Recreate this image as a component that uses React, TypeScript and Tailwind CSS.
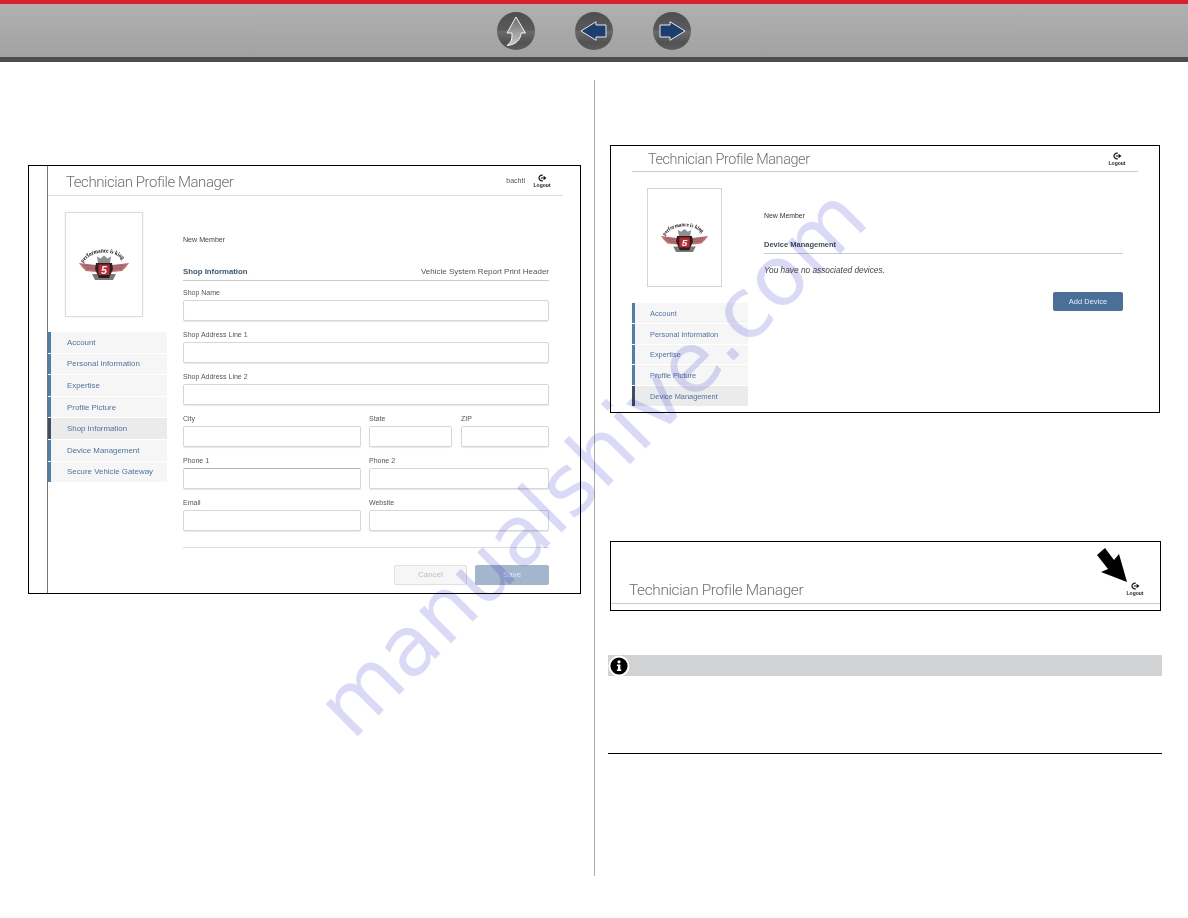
import { useId } from "react";

const menuA = ["Account", "Personal Information", "Expertise", "Profile Picture", "Shop Information", "Device Management", "Secure Vehicle Gateway"];
const menuB = ["Account", "Personal Information", "Expertise", "Profile Picture", "Device Management"];

function NavCircle({ children }: { children: React.ReactNode }) {
  return (
    <div className="w-[38px] h-[38px] rounded-full bg-[linear-gradient(180deg,#4e4e50_0%,#5a5a5c_46%,#6a6a6b_52%,#525254_80%,#5c5c5d_100%)]">
      <svg viewBox="0 0 38 38" className="w-[38px] h-[38px]">
        {children}
      </svg>
    </div>
  );
}

function Logo({ className }: { className: string }) {
  const id = useId();
  return (
    <svg viewBox="0 0 50 33" className={`overflow-visible ${className}`}>
      <path id={id} d="M4 15 C10 6 19 4.5 25 4.5 C31 4.5 40 6 46 15" fill="none" />
      <text fontFamily="'Liberation Serif', serif" fontWeight="700" fontSize="6" fill="#111111">
        <textPath href={`#${id}`} textLength="45" lengthAdjust="spacingAndGlyphs">performance is king</textPath>
      </text>
      <path d="M19 15 L18 8.5 L21.5 10.5 L25 7.5 L28.5 10.5 L32 8.5 L31 15 Z" fill="#8d8f92" />
      <path d="M0 15 L17 17 L17 24 L7 23 L3 19 Z" fill="#c9686c" />
      <path d="M50 15 L33 17 L33 24 L43 23 L47 19 Z" fill="#c9686c" />
      <path d="M5 17.5 L16 18.5 M7 20 L16 21 M45 17.5 L34 18.5 M43 20 L34 21" stroke="#6b6b6b" strokeWidth="0.8" />
      <path d="M13 26 L37 26 L34 32 L16 32 Z" fill="#77787a" />
      <path d="M17 15 H33 L34 21 L30 30 H20 L16 21 Z" fill="#232323" />
      <rect x="19.5" y="16.5" width="11" height="10.5" fill="#c9252c" />
      <text x="25" y="25.5" textAnchor="middle" fontFamily="'Liberation Sans', sans-serif" fontWeight="700" fontStyle="italic" fontSize="10.5" fill="#ffffff">5</text>
    </svg>
  );
}

function Logout({ className = "" }: { className?: string }) {
  return (
    <div className={`flex flex-col items-center w-[16px] ${className}`}>
      <svg viewBox="0 0 12 10" className="w-[10px] h-[8px]">
        <path d="M7 1.6 A3.6 3.6 0 1 0 7 8.4" fill="none" stroke="#111" strokeWidth="1.5" />
        <path d="M4.5 5 H9.5 M8 3 L10.5 5 L8 7" fill="none" stroke="#111" strokeWidth="1.3" />
      </svg>
      <span className="text-[5px] leading-[6px] font-bold text-[#222]">Logout</span>
    </div>
  );
}

function Title({ size }: { size: string }) {
  return <span className={`font-['Roboto',sans-serif] font-light text-[#6f6f6f] ${size}`}>Technician Profile Manager</span>;
}

function Menu({ items, active, itemClass }: { items: string[]; active: string; itemClass: string }) {
  return (
    <div className="flex flex-col gap-px">
      {items.map((m) => (
        <div
          key={m}
          className={`flex items-center border-l-[3px] pt-px text-[#4c74a0] ${itemClass} ${
            m === active ? "bg-[#ebebeb] border-[#3f4e62]" : "bg-[#f6f6f6] border-[#4a80b4]"
          }`}
        >
          {m}
        </div>
      ))}
    </div>
  );
}

function Field({ label, className, inputClass = "border-[#d6d6d6]" }: { label: string; className: string; inputClass?: string }) {
  return (
    <label className={`block ${className}`}>
      <span className="block h-[13px] text-[7px] leading-[12px] text-[#555]">{label}</span>
      <input readOnly className={`block w-full h-[21px] bg-white border rounded-[2px] shadow-[0_1px_1px_#e8e8e8] ${inputClass}`} />
    </label>
  );
}

export default function App() {
  return (
    <div className="relative w-[1188px] h-[918px] overflow-hidden bg-white font-['Liberation_Sans',Arial,sans-serif]">
      {/* top bar */}
      <div className="h-[4px] bg-[#d9202c]" />
      <div className="flex items-center justify-center gap-[40px] h-[53px] bg-[linear-gradient(180deg,#b0b0b0,#a2a2a2)]">
        <NavCircle>
          <defs>
            <linearGradient id="upFill" x1="0" y1="0" x2="0" y2="1">
              <stop offset="0" stopColor="#6a6a6c" />
              <stop offset="1" stopColor="#c9c9c9" />
            </linearGradient>
          </defs>
          <path d="M19 5 L28.5 21 H24 C24 27 19 33 10 33.5 C13.5 31 15 28 15 24 V21 H10 Z" fill="url(#upFill)" stroke="#f4f4f4" strokeWidth="1" strokeLinejoin="round" />
        </NavCircle>
        <NavCircle>
          <path d="M6 19 L21 9.7 V13 H31 V25 H21 V28.3 Z" fill="#1c3d70" stroke="#e8e8e8" strokeWidth="1" strokeLinejoin="round" />
        </NavCircle>
        <NavCircle>
          <path d="M32 19 L17 9.7 V13 H7 V25 H17 V28.3 Z" fill="#1c3d70" stroke="#e8e8e8" strokeWidth="1" strokeLinejoin="round" />
        </NavCircle>
      </div>
      <div className="h-[5px] bg-[#4d4d4f]" />

      <div className="flex mt-[18px] h-[796px]">
        {/* left column */}
        <div className="w-[595px] border-r border-[#aaaaaa] pl-[28px] pt-[85px]">
          <div className="w-[553px] h-[429px] border border-black pl-[18px]">
            <div className="w-[516px] h-full border-l border-[#777777]">
              <div className="flex items-center justify-between h-[30px] border-b border-[#dddddd] pl-[18px] pr-[13px]">
                <Title size="mt-[3px] text-[15px] tracking-[-0.44px]" />
                <div className="flex items-center gap-[9px]">
                  <span className="mt-px text-[7px] text-[#555]">bachtl</span>
                  <Logout />
                </div>
              </div>
              <div className="flex">
                <div className="w-[119px] pt-[16px]">
                  <div className="flex items-center justify-center ml-[17px] w-[78px] h-[105px] border border-[#dddddd] shadow-[0_0_1px_#dddddd]">
                    <Logo className="w-[50px] h-[33px]" />
                  </div>
                  <div className="mt-[15px]">
                    <Menu items={menuA} active="Shop Information" itemClass="h-[20.6px] pl-[16px] text-[7.9px]" />
                  </div>
                </div>
                <div className="w-[366px] ml-[16px] pt-[39px]">
                  <div className="h-[10px] text-[7.1px] leading-[10px] text-[#444]">New Member</div>
                  <div className="flex items-center justify-between mt-[18px] h-[18px] border-b border-[#cccccc]">
                    <span className="text-[7.8px] font-bold text-[#3d5874]">Shop Information</span>
                    <span className="text-[8px] text-[#555]">Vehicle System Report Print Header</span>
                  </div>
                  <div className="flex flex-col gap-[8px] mt-[6px]">
                    <Field label="Shop Name" className="w-full" />
                    <Field label="Shop Address Line 1" className="w-full" />
                    <Field label="Shop Address Line 2" className="w-full" />
                    <div className="flex">
                      <Field label="City" className="w-[178px]" />
                      <Field label="State" className="w-[83px] ml-[8px]" />
                      <Field label="ZIP" className="w-[88px] ml-[9px]" />
                    </div>
                    <div className="flex gap-[8px]">
                      <Field label="Phone 1" className="w-[178px]" inputClass="border-[#d6d6d6] border-t-[#b4b4b4]" />
                      <Field label="Phone 2" className="w-[180px]" />
                    </div>
                    <div className="flex gap-[8px]">
                      <Field label="Email" className="w-[178px]" />
                      <Field label="Website" className="w-[180px]" />
                    </div>
                  </div>
                  <div className="mt-[16px] border-t border-[#dddddd]" />
                  <div className="flex justify-end gap-[8px] mt-[17px]">
                    <button className="w-[73px] h-[20px] bg-[#f6f6f6] border border-[#e0e0e0] rounded-[2px] text-[8px] text-[#bdbdbd]">Cancel</button>
                    <button className="w-[74px] h-[20px] bg-[#a4b6cd] rounded-[2px] text-[8px] text-[#e3e6f4]">Save</button>
                  </div>
                </div>
              </div>
            </div>
          </div>
        </div>

        {/* right column */}
        <div className="w-[554px] ml-[13px] pt-[65px]">
          <div className="ml-[2px] w-[550px] h-[268px] border border-black pl-[21px]">
            <div className="w-[506px]">
              <div className="flex items-center justify-between h-[26px] border-b border-[#cccccc] pl-[16px] pr-[13px]">
                <Title size="mt-[3px] text-[14.4px] tracking-[-0.38px]" />
                <Logout />
              </div>
              <div className="flex">
                <div className="w-[116px] pt-[16px]">
                  <div className="flex items-center justify-center ml-[15px] w-[75px] h-[99px] border border-[#d4d4d4]">
                    <Logo className="w-[47px] h-[33px]" />
                  </div>
                  <div className="mt-[16px]">
                    <Menu items={menuB} active="Device Management" itemClass="h-[19.8px] pl-[15px] text-[7.4px]" />
                  </div>
                </div>
                <div className="w-[359px] ml-[16px] pt-[39px]">
                  <div className="h-[10px] text-[6.9px] leading-[10px] text-[#333]">New Member</div>
                  <div className="flex items-center mt-[16px] h-[17px] border-b border-[#cccccc]">
                    <span className="text-[7.5px] font-bold text-[#3d4d60]">Device Management</span>
                  </div>
                  <div className="mt-[9px] text-[8.3px] leading-[14px] italic text-[#444]">You have no associated devices.</div>
                  <div className="flex justify-end mt-[15px]">
                    <button className="w-[70px] h-[19px] bg-[#4a7099] rounded-[2px] text-[7.5px] text-[#e6edf4]">Add Device</button>
                  </div>
                </div>
              </div>
            </div>
          </div>

          <div className="relative ml-[2px] w-[551px] h-[70px] mt-[128px] border border-black flex flex-col justify-end pb-[6px]">
            <div className="flex items-end justify-between h-[34px] border-b border-[#cccccc] pl-[18px] pr-[17px] pb-[4px]">
              <Title size="text-[15.4px] leading-[18px] tracking-[-0.35px]" />
              <Logout className="mb-[3px]" />
            </div>
            <svg viewBox="0 0 34 38" className="absolute left-[485px] top-[4px] w-[34px] h-[38px]">
              <path d="M9 2 L18 14 L23 8 L31 36 L5 26 L12 23 L1 9 Z" fill="#000000" />
            </svg>
          </div>

          <div className="flex items-center h-[21px] mt-[44px] bg-[#d1d2d4]">
            <svg viewBox="0 0 22 22" className="w-[22px] h-[22px]">
              <circle cx="11" cy="11" r="10.5" fill="#ffffff" />
              <circle cx="11" cy="11" r="8.6" fill="#000000" />
              <circle cx="11" cy="6.8" r="1.6" fill="#ffffff" />
              <path d="M8.9 9.5 H12.4 V14.6 H13.3 V16 H8.9 V14.6 H9.9 V10.9 H8.9 Z" fill="#ffffff" />
            </svg>
          </div>
          <div className="h-px mt-[77px] bg-black" />
        </div>
      </div>

      {/* watermark */}
      <span className="absolute left-[361px] top-[670px] origin-bottom-left -rotate-45 whitespace-nowrap pointer-events-none mix-blend-multiply font-['DejaVu_Sans',sans-serif] text-[83px] leading-[80px] text-[#dadaf8]">
        manualshive.com
      </span>
    </div>
  );
}
